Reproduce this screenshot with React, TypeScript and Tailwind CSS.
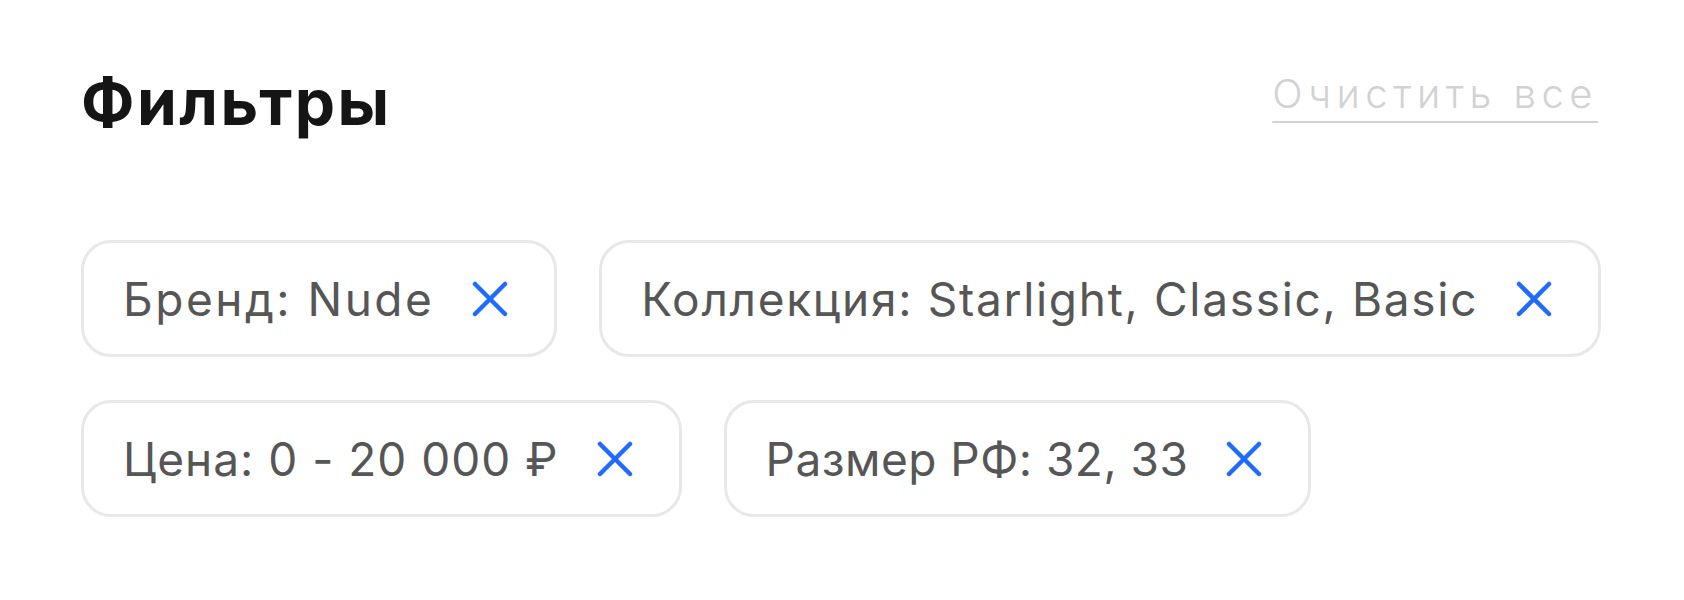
import React from 'react';

// Active filter chips panel

const filters = [
  { label: 'Бренд: Nude', tracking: 'tracking-[2.5px]' },
  { label: 'Коллекция: Starlight, Classic, Basic', tracking: 'tracking-[1.7px]' },
  { label: 'Цена: 0 - 20 000 ₽', tracking: 'tracking-[1px]' },
  { label: 'Размер РФ: 32, 33', tracking: 'tracking-[0.5px]' },
];

function CloseIcon() {
  return (
    <svg width="36" height="36" viewBox="0 0 36 36" fill="none" aria-hidden="true">
      <path d="M3 3L33 33M33 3L3 33" stroke="#1f6bff" strokeWidth="4.5" strokeLinecap="round" />
    </svg>
  );
}

function FilterChip({ label, tracking }: { label: string; tracking: string }) {
  return (
    <div className="flex h-[117px] shrink-0 items-center gap-[38px] rounded-[30px] border-[3px] border-[#e8e8e8] bg-white pl-[39px] pr-[46px]">
      <span className={`whitespace-nowrap text-[46px] leading-none text-[#565656] ${tracking}`}>{label}</span>
      <button className="flex items-center justify-center">
        <CloseIcon />
      </button>
    </div>
  );
}

export default function App() {
  return (
    <div className="min-h-[600px] bg-white pl-[81px] pr-[72px] pt-[70px] font-['Inter',sans-serif]">
      <div className="flex items-start justify-between">
        <h1 className="text-[64px] font-bold leading-none tracking-[2.5px] text-[#151515]">Фильтры</h1>
        <button className="mt-[4px] mr-[14px] text-[40px] font-light leading-none tracking-[5.5px] text-[#d2d2d2] underline decoration-2 underline-offset-[13px]">
          Очистить все
        </button>
      </div>
      <div className="mt-[106px] flex flex-wrap gap-x-[42px] gap-y-[43px]">
        {filters.map((f) => (
          <FilterChip key={f.label} label={f.label} tracking={f.tracking} />
        ))}
      </div>
    </div>
  );
}
